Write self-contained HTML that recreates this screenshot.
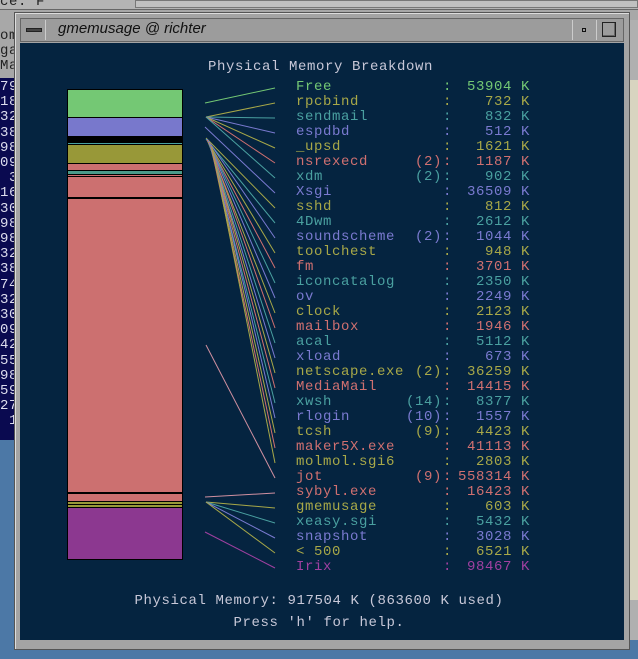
<!DOCTYPE html>
<html><head><meta charset="utf-8"><style>
*{margin:0;padding:0;box-sizing:border-box}
body{width:638px;height:659px;overflow:hidden;background:#4c78a6;position:relative;font-family:"Liberation Mono",monospace}
.abs{position:absolute}
.t{position:absolute;font-size:14px;letter-spacing:0.6px;line-height:15px;white-space:pre}
.r{position:absolute;left:0;width:638px;height:15px;font-size:14px;letter-spacing:0.6px;line-height:15px;white-space:pre}
.r b{position:absolute;font-weight:normal;top:0}
.n{left:296px}.p{left:390px;width:52px;text-align:right}.c{left:443px}.v{left:450px;width:62px;text-align:right}.k{left:521px}
</style></head><body>
<div class="abs" style="left:0;top:0;width:638px;height:78px;background:#a8a8a8"></div>
<div class="abs" style="left:0;top:0;width:638px;height:10px;background:#b4b4b4;border-bottom:1px solid #666"></div>
<div class="abs" style="left:135px;top:0;width:503px;height:8px;background:#c0c0c0;border:1px solid #777"></div>
<div class="t" style="left:0;top:-5px;color:#222">ce: F</div>
<div class="t" style="left:0;top:29px;color:#222">om</div>
<div class="t" style="left:0;top:44px;color:#222">ga</div>
<div class="t" style="left:0;top:59px;color:#222">Ma</div>
<div class="abs" style="left:0;top:78px;width:16px;height:362px;background:#0a0a50"></div>
<div class="t" style="left:0;top:80px;color:#dde;line-height:15.2px">79
18
32
38
98
09
 3
16
30
98
98
32
38
74
32
30
09
42
55
98
59
27
 1</div>
<div class="abs" style="left:628px;top:20px;width:10px;height:620px;background:#b0b0b0"></div>
<div class="abs" style="left:630px;top:80px;width:8px;height:520px;background:#d8d4c0"></div>
<div class="abs" style="left:14px;top:12px;width:616px;height:638px;background:#a4a4a4;border:1px solid #555;box-shadow:inset 1px 1px 0 #ddd"></div>
<div class="abs" style="left:20px;top:18px;width:604px;height:24px;background:#9c9c9c;border:1px solid #666"></div>
<div class="abs" style="left:22px;top:20px;width:24px;height:20px;border-right:1px solid #ccc"></div>
<div class="abs" style="left:26px;top:28px;width:16px;height:4px;background:#444;border:1px solid #222"></div>
<div class="abs" style="left:58px;top:19px;font-family:'Liberation Sans',sans-serif;font-style:italic;font-size:15px;line-height:20px;color:#111">gmemusage @ richter</div>
<div class="abs" style="left:572px;top:20px;width:1px;height:20px;background:#ccc"></div>
<div class="abs" style="left:596px;top:20px;width:1px;height:20px;background:#ccc"></div>
<div class="abs" style="left:582px;top:28px;width:4px;height:4px;border:1px solid #111"></div>
<div class="abs" style="left:602px;top:22px;width:14px;height:15px;border:1px solid #222;box-shadow:inset -1px -1px 0 #666"></div>
<div class="abs" style="left:20px;top:43px;width:604px;height:597px;background:#052440"></div>
<div class="t" style="left:208px;top:60px;color:#c8c8d8">Physical Memory Breakdown</div>
<div class="abs" style="left:67px;top:89px;width:116px;height:471px;background:#000"></div>
<div class="abs" style="left:68px;top:90px;width:114px;height:27px;background:#74c874"></div>
<div class="abs" style="left:68px;top:118px;width:114px;height:18px;background:#7878cc"></div>
<div class="abs" style="left:68px;top:143px;width:114px;height:1px;background:#4aa0a0"></div>
<div class="abs" style="left:68px;top:145px;width:114px;height:18px;background:#989838"></div>
<div class="abs" style="left:68px;top:164px;width:114px;height:6px;background:#cc7070"></div>
<div class="abs" style="left:68px;top:171px;width:114px;height:3px;background:#4a9a8a"></div>
<div class="abs" style="left:68px;top:175px;width:114px;height:1px;background:#cc7070"></div>
<div class="abs" style="left:68px;top:177px;width:114px;height:20px;background:#cc7070"></div>
<div class="abs" style="left:68px;top:199px;width:114px;height:293px;background:#cc7070"></div>
<div class="abs" style="left:68px;top:494px;width:114px;height:7px;background:#cc7070"></div>
<div class="abs" style="left:68px;top:502px;width:114px;height:2px;background:#989838"></div>
<div class="abs" style="left:68px;top:505px;width:114px;height:2px;background:#989838"></div>
<div class="abs" style="left:68px;top:508px;width:114px;height:51px;background:#8c3890"></div>
<svg class="abs" style="left:0;top:0" width="638" height="659" stroke-width="1" fill="none">
<line x1="205" y1="103" x2="275" y2="88" stroke="#74c874"/>
<line x1="206" y1="117" x2="275" y2="103" stroke="#a8a848"/>
<line x1="206" y1="117" x2="275" y2="118" stroke="#4aa0a0"/>
<line x1="206" y1="117" x2="275" y2="133" stroke="#7a7ad0"/>
<line x1="206" y1="117" x2="275" y2="148" stroke="#a8a848"/>
<line x1="206" y1="117" x2="275" y2="163" stroke="#d07070"/>
<line x1="206" y1="117" x2="275" y2="178" stroke="#4aa0a0"/>
<line x1="205" y1="127" x2="275" y2="193" stroke="#7a7ad0"/>
<line x1="206" y1="138" x2="275" y2="208" stroke="#a8a848"/>
<line x1="206" y1="139" x2="275" y2="223" stroke="#4aa0a0"/>
<line x1="207" y1="139" x2="275" y2="238" stroke="#7a7ad0"/>
<line x1="207" y1="140" x2="275" y2="253" stroke="#a8a848"/>
<line x1="207" y1="140" x2="275" y2="268" stroke="#d07070"/>
<line x1="208" y1="141" x2="275" y2="283" stroke="#4aa0a0"/>
<line x1="208" y1="141" x2="275" y2="298" stroke="#7a7ad0"/>
<line x1="208" y1="142" x2="275" y2="313" stroke="#a8a848"/>
<line x1="209" y1="142" x2="275" y2="328" stroke="#d07070"/>
<line x1="209" y1="143" x2="275" y2="343" stroke="#4aa0a0"/>
<line x1="209" y1="143" x2="275" y2="358" stroke="#7a7ad0"/>
<line x1="210" y1="144" x2="275" y2="373" stroke="#a8a848"/>
<line x1="210" y1="144" x2="275" y2="388" stroke="#d07070"/>
<line x1="210" y1="145" x2="275" y2="403" stroke="#4aa0a0"/>
<line x1="211" y1="145" x2="275" y2="418" stroke="#7a7ad0"/>
<line x1="211" y1="146" x2="275" y2="433" stroke="#a8a848"/>
<line x1="211" y1="146" x2="275" y2="448" stroke="#d07070"/>
<line x1="212" y1="147" x2="275" y2="463" stroke="#a8a848"/>
<line x1="206" y1="345" x2="275" y2="478" stroke="#d090a0"/>
<line x1="205" y1="497" x2="275" y2="493" stroke="#d090a0"/>
<line x1="206" y1="502" x2="275" y2="508" stroke="#a8a848"/>
<line x1="206" y1="502" x2="275" y2="523" stroke="#4aa0a0"/>
<line x1="206" y1="502" x2="275" y2="538" stroke="#7a7ad0"/>
<line x1="206" y1="502" x2="275" y2="553" stroke="#a8a848"/>
<line x1="205" y1="532" x2="275" y2="568" stroke="#a040a0"/>
</svg>
<div class="r" style="top:80px;color:#74c874"><b class="n">Free</b><b class="c">:</b><b class="v">53904</b><b class="k">K</b></div>
<div class="r" style="top:95px;color:#a8a848"><b class="n">rpcbind</b><b class="c">:</b><b class="v">732</b><b class="k">K</b></div>
<div class="r" style="top:110px;color:#4aa0a0"><b class="n">sendmail</b><b class="c">:</b><b class="v">832</b><b class="k">K</b></div>
<div class="r" style="top:125px;color:#7a7ad0"><b class="n">espdbd</b><b class="c">:</b><b class="v">512</b><b class="k">K</b></div>
<div class="r" style="top:140px;color:#a8a848"><b class="n">_upsd</b><b class="c">:</b><b class="v">1621</b><b class="k">K</b></div>
<div class="r" style="top:155px;color:#d07070"><b class="n">nsrexecd</b><b class="p">(2)</b><b class="c">:</b><b class="v">1187</b><b class="k">K</b></div>
<div class="r" style="top:170px;color:#4aa0a0"><b class="n">xdm</b><b class="p">(2)</b><b class="c">:</b><b class="v">902</b><b class="k">K</b></div>
<div class="r" style="top:185px;color:#7a7ad0"><b class="n">Xsgi</b><b class="c">:</b><b class="v">36509</b><b class="k">K</b></div>
<div class="r" style="top:200px;color:#a8a848"><b class="n">sshd</b><b class="c">:</b><b class="v">812</b><b class="k">K</b></div>
<div class="r" style="top:215px;color:#4aa0a0"><b class="n">4Dwm</b><b class="c">:</b><b class="v">2612</b><b class="k">K</b></div>
<div class="r" style="top:230px;color:#7a7ad0"><b class="n">soundscheme</b><b class="p">(2)</b><b class="c">:</b><b class="v">1044</b><b class="k">K</b></div>
<div class="r" style="top:245px;color:#a8a848"><b class="n">toolchest</b><b class="c">:</b><b class="v">948</b><b class="k">K</b></div>
<div class="r" style="top:260px;color:#d07070"><b class="n">fm</b><b class="c">:</b><b class="v">3701</b><b class="k">K</b></div>
<div class="r" style="top:275px;color:#4aa0a0"><b class="n">iconcatalog</b><b class="c">:</b><b class="v">2350</b><b class="k">K</b></div>
<div class="r" style="top:290px;color:#7a7ad0"><b class="n">ov</b><b class="c">:</b><b class="v">2249</b><b class="k">K</b></div>
<div class="r" style="top:305px;color:#a8a848"><b class="n">clock</b><b class="c">:</b><b class="v">2123</b><b class="k">K</b></div>
<div class="r" style="top:320px;color:#d07070"><b class="n">mailbox</b><b class="c">:</b><b class="v">1946</b><b class="k">K</b></div>
<div class="r" style="top:335px;color:#4aa0a0"><b class="n">acal</b><b class="c">:</b><b class="v">5112</b><b class="k">K</b></div>
<div class="r" style="top:350px;color:#7a7ad0"><b class="n">xload</b><b class="c">:</b><b class="v">673</b><b class="k">K</b></div>
<div class="r" style="top:365px;color:#a8a848"><b class="n">netscape.exe</b><b class="p">(2)</b><b class="c">:</b><b class="v">36259</b><b class="k">K</b></div>
<div class="r" style="top:380px;color:#d07070"><b class="n">MediaMail</b><b class="c">:</b><b class="v">14415</b><b class="k">K</b></div>
<div class="r" style="top:395px;color:#4aa0a0"><b class="n">xwsh</b><b class="p">(14)</b><b class="c">:</b><b class="v">8377</b><b class="k">K</b></div>
<div class="r" style="top:410px;color:#7a7ad0"><b class="n">rlogin</b><b class="p">(10)</b><b class="c">:</b><b class="v">1557</b><b class="k">K</b></div>
<div class="r" style="top:425px;color:#a8a848"><b class="n">tcsh</b><b class="p">(9)</b><b class="c">:</b><b class="v">4423</b><b class="k">K</b></div>
<div class="r" style="top:440px;color:#d07070"><b class="n">maker5X.exe</b><b class="c">:</b><b class="v">41113</b><b class="k">K</b></div>
<div class="r" style="top:455px;color:#a8a848"><b class="n">molmol.sgi6</b><b class="c">:</b><b class="v">2803</b><b class="k">K</b></div>
<div class="r" style="top:470px;color:#d07070"><b class="n">jot</b><b class="p">(9)</b><b class="c">:</b><b class="v">558314</b><b class="k">K</b></div>
<div class="r" style="top:485px;color:#d07070"><b class="n">sybyl.exe</b><b class="c">:</b><b class="v">16423</b><b class="k">K</b></div>
<div class="r" style="top:500px;color:#a8a848"><b class="n">gmemusage</b><b class="c">:</b><b class="v">603</b><b class="k">K</b></div>
<div class="r" style="top:515px;color:#4aa0a0"><b class="n">xeasy.sgi</b><b class="c">:</b><b class="v">5432</b><b class="k">K</b></div>
<div class="r" style="top:530px;color:#7a7ad0"><b class="n">snapshot</b><b class="c">:</b><b class="v">3028</b><b class="k">K</b></div>
<div class="r" style="top:545px;color:#a8a848"><b class="n">&lt; 500</b><b class="c">:</b><b class="v">6521</b><b class="k">K</b></div>
<div class="r" style="top:560px;color:#a040a0"><b class="n">Irix</b><b class="c">:</b><b class="v">98467</b><b class="k">K</b></div>
<div class="t" style="left:0;width:638px;top:594px;text-align:center;color:#c8c8d8">Physical Memory: 917504 K (863600 K used)</div>
<div class="t" style="left:0;width:638px;top:616px;text-align:center;color:#c8c8d8">Press 'h' for help.</div>
</body></html>
